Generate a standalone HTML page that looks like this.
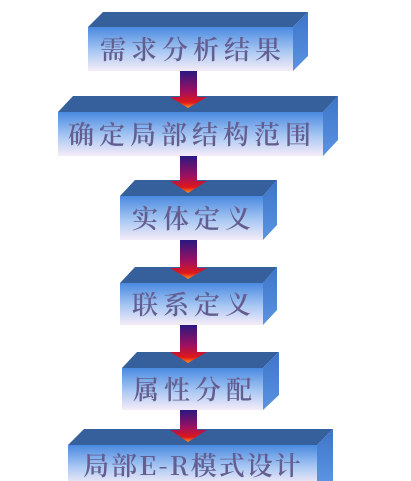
<!DOCTYPE html>
<html><head><meta charset="utf-8"><style>
html,body{margin:0;padding:0;background:#fff;width:411px;height:481px;overflow:hidden}
text{font-family:"Noto Serif CJK SC","Liberation Serif",serif;fill:#645e90;font-size:26px;letter-spacing:5px;font-weight:600}
</style></head><body>
<svg width="411" height="481" viewBox="0 0 411 481">
<defs>
<linearGradient id="fr" x1="0" y1="0" x2="0" y2="1">
<stop offset="0" stop-color="#4a8ae0"/><stop offset="0.55" stop-color="#a9c8f3"/><stop offset="1" stop-color="#f6ecf8"/></linearGradient>
<linearGradient id="sd" x1="0" y1="0" x2="0" y2="1">
<stop offset="0" stop-color="#3d74c8"/><stop offset="1" stop-color="#5a94e2"/></linearGradient>
<linearGradient id="ar" x1="0" y1="0" x2="0" y2="1">
<stop offset="0" stop-color="#2a1880"/><stop offset="0.55" stop-color="#a01060"/><stop offset="0.85" stop-color="#e01818"/><stop offset="1" stop-color="#ff9020"/></linearGradient>
</defs>
<polygon points="88,27 103,12 308,12 293,27" fill="#36609c"/>
<polygon points="293,27 308,12 308,56 293,71" fill="url(#sd)"/>
<rect x="88" y="27" width="205" height="44" fill="url(#fr)"/>
<text x="193" y="59" text-anchor="middle">需求分析结果</text>
<polygon points="58,112 73,96 338,96 323,112" fill="#36609c"/>
<polygon points="323,112 338,96 338,140 323,156" fill="url(#sd)"/>
<rect x="58" y="112" width="265" height="44" fill="url(#fr)"/>
<text x="192" y="144" text-anchor="middle">确定局部结构范围</text>
<polygon points="120,196 135,180 277,180 263,196" fill="#36609c"/>
<polygon points="263,196 277,180 277,225 263,240" fill="url(#sd)"/>
<rect x="120" y="196" width="143" height="44" fill="url(#fr)"/>
<text x="194" y="228" text-anchor="middle">实体定义</text>
<polygon points="120,283 135,267 277,267 263,283" fill="#36609c"/>
<polygon points="263,283 277,267 277,310 263,325" fill="url(#sd)"/>
<rect x="120" y="283" width="143" height="42" fill="url(#fr)"/>
<text x="194" y="314" text-anchor="middle">联系定义</text>
<polygon points="122,368 137,352 279,352 263,368" fill="#36609c"/>
<polygon points="263,368 279,352 279,395 263,410" fill="url(#sd)"/>
<rect x="122" y="368" width="141" height="42" fill="url(#fr)"/>
<text x="195" y="399" text-anchor="middle">属性分配</text>
<polygon points="68,445 84,429 333,429 317,445" fill="#36609c"/>
<polygon points="317,445 333,429 333,481 317,481" fill="url(#sd)"/>
<rect x="68" y="445" width="249" height="40" fill="url(#fr)"/>
<text x="193" y="475" text-anchor="middle" style="letter-spacing:2px">局部E-R模式设计</text>
<g fill="url(#ar)">
<polygon points="180,71 197,71 197,97 207,97 188,108 170,97 180,97"/>
<polygon points="180,156 197,156 197,181 207,181 188,193 170,181 180,181"/>
<polygon points="180,240 197,240 197,268 207,268 188,279 170,268 180,268"/>
<polygon points="180,325 197,325 197,352 207,352 188,363 170,352 180,352"/>
<polygon points="180,410 197,410 197,430 207,430 188,442 170,430 180,430"/>
</g>
</svg>
</body></html>
